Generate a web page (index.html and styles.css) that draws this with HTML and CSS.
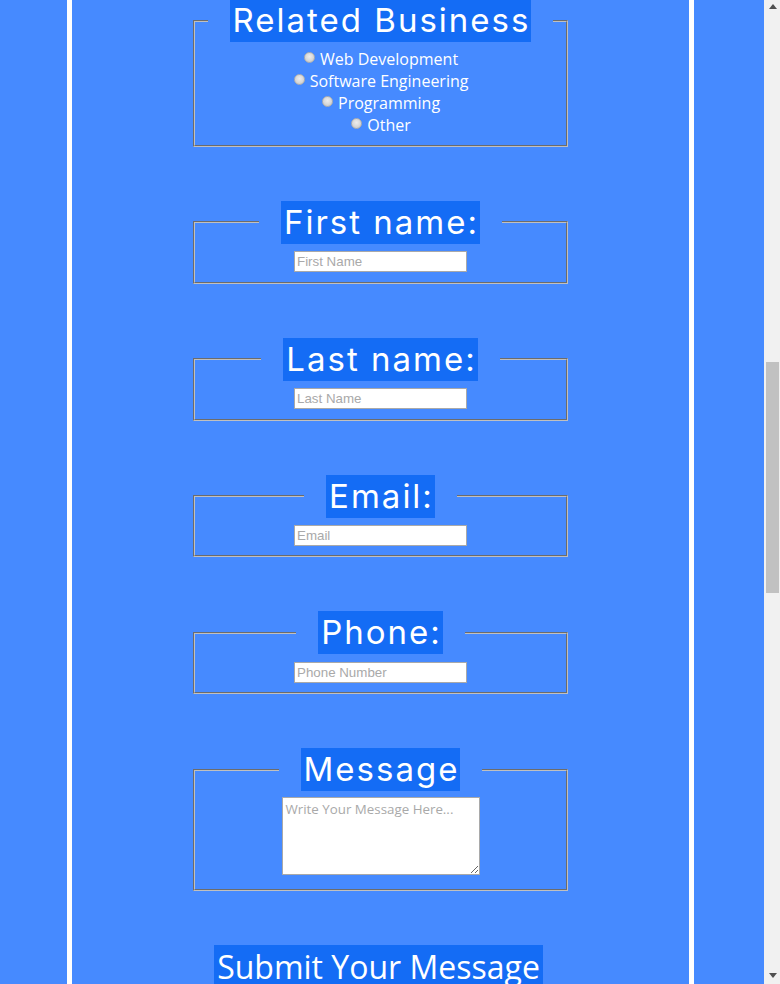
FILE: index.html
```html
<!DOCTYPE html>
<html lang="en">
<head>
<meta charset="utf-8">
<title>Contact Us</title>
<link rel="stylesheet" href="styles.css">
</head>
<body>
<div class="page">
  <header class="intro">
    <h1 class="intro-title">Contact Us</h1>
    <p class="intro-text">Tell us about your project and we will get back to you as soon as possible.</p>
  </header>

  <form class="contact" action="#">
    <fieldset class="group related">
      <legend class="group-legend"><span class="legend-text">Related Business</span></legend>
      <label class="choice"><input class="radio" type="radio" name="business"> Web Development</label>
      <label class="choice"><input class="radio" type="radio" name="business"> Software Engineering</label>
      <label class="choice"><input class="radio" type="radio" name="business"> Programming</label>
      <label class="choice"><input class="radio" type="radio" name="business"> Other</label>
    </fieldset>

    <fieldset class="group">
      <legend class="group-legend"><span class="legend-text">First name:</span></legend>
      <div class="field"><input class="text-input" type="text" placeholder="First Name"></div>
    </fieldset>

    <fieldset class="group">
      <legend class="group-legend"><span class="legend-text">Last name:</span></legend>
      <div class="field"><input class="text-input" type="text" placeholder="Last Name"></div>
    </fieldset>

    <fieldset class="group">
      <legend class="group-legend"><span class="legend-text">Email:</span></legend>
      <div class="field"><input class="text-input" type="email" placeholder="Email"></div>
    </fieldset>

    <fieldset class="group">
      <legend class="group-legend"><span class="legend-text">Phone:</span></legend>
      <div class="field"><input class="text-input" type="tel" placeholder="Phone Number"></div>
    </fieldset>

    <fieldset class="group">
      <legend class="group-legend"><span class="legend-text">Message</span></legend>
      <div class="field"><textarea class="message" placeholder="Write Your Message Here..."></textarea></div>
    </fieldset>

    <button class="submit" type="submit">Submit Your Message</button>
  </form>

  <footer class="footer">
    <p class="footer-text">Thank you for visiting.</p>
  </footer>
</div>

<div class="scrollbar" aria-hidden="true">
  <svg class="scroll-arrow scroll-arrow-up" width="8" height="5" viewBox="0 0 8 5"><polygon points="0,5 8,5 4,0" fill="#505050"/></svg>
  <div class="scroll-thumb"></div>
  <svg class="scroll-arrow scroll-arrow-down" width="8" height="5" viewBox="0 0 8 5"><polygon points="0,0 8,0 4,5" fill="#505050"/></svg>
</div>
<script src="script.js"></script>
</body>
</html>
```

FILE: styles.css
```css
html {
  background: #468aff;
}

body {
  margin: 0;
  background: #468aff;
  font-family: "Open Sans", "Noto Sans", sans-serif;
  font-size: 16px;
  color: #ffffff;
}

.page {
  width: 617px;
  margin-left: 67px;
  border-left: 5px solid #ffffff;
  border-right: 5px solid #ffffff;
  background: #468aff;
}

.intro {
  min-height: 1469px;
  text-align: center;
  box-sizing: border-box;
  padding-top: 40px;
}

.intro-title {
  margin: 0;
  font-family: Inter, sans-serif;
  font-weight: 400;
  font-size: 48px;
}

.intro-text {
  margin: 16px 40px;
}

.contact {
  display: flex;
  flex-direction: column;
  align-items: center;
  gap: 54px;
}

.group {
  box-sizing: border-box;
  width: 375px;
  margin: 0;
  padding: 0.35em 0.75em 9.25px;
  border: 2px groove #c0c0c0;
  text-align: center;
}

.group-legend {
  margin: 0 auto;
  padding: 0 22px;
}

.legend-text {
  display: inline-block;
  padding: 0 1px 0 3px;
  background: #146cf5;
  color: #ffffff;
  font-family: Inter, sans-serif;
  font-size: 33px;
  letter-spacing: 2px;
  line-height: 43px;
  font-weight: 400;
}

.choice {
  display: block;
  line-height: 22px;
  padding-right: 4px;
}

.radio {
  appearance: none;
  -webkit-appearance: none;
  width: 11px;
  height: 11px;
  margin: 0 1px 0 5px;
  border: 1px solid #b0b0b0;
  border-radius: 50%;
  background: radial-gradient(circle at 50% 40%, #ededed 0%, #d8d8d8 55%, #c0c0c0 100%);
  vertical-align: 2px;
  box-sizing: border-box;
}

.text-input {
  box-sizing: border-box;
  width: 173px;
  height: 21px;
  margin: 0;
  padding: 1px 2px;
  border: 1px solid #a9a9a9;
  background: #ffffff;
  font-family: "Liberation Sans", Arial, sans-serif;
  font-size: 13.33px;
  color: #000000;
}

.text-input::placeholder {
  color: #a9a9a9;
}

.message {
  box-sizing: border-box;
  width: 198px;
  height: 78px;
  margin: 0;
  padding: 2px 3px;
  border: 1px solid #a9a9a9;
  background: #ffffff;
  font-family: "Open Sans", sans-serif;
  font-size: 13.33px;
  vertical-align: baseline;
}

.message::placeholder {
  color: #a9a9a9;
}

.submit {
  margin: 0 4px 0 0;
  padding: 0 3px;
  border: none;
  background: #146cf5;
  color: #ffffff;
  font-family: "Open Sans", sans-serif;
  font-size: 32px;
  line-height: normal;
  cursor: pointer;
}

.footer {
  min-height: 1540px;
  text-align: center;
  padding-top: 40px;
  box-sizing: border-box;
}

.footer-text {
  margin: 0;
}

.scrollbar {
  position: fixed;
  top: 0;
  right: 0;
  bottom: 0;
  width: 16px;
  background: #f1f1f1;
}

.scroll-arrow {
  position: absolute;
  left: 5px;
  display: block;
}

.scroll-arrow-up {
  top: 4px;
}

.scroll-arrow-down {
  bottom: 6px;
}

.scroll-thumb {
  position: absolute;
  top: 362px;
  left: 2px;
  right: 1px;
  height: 231px;
  background: #c1c1c1;
}
```

FILE: script.js
```js
function placeView() {
  var target = document.querySelector('.related');
  if (!target) return;
  var top = target.getBoundingClientRect().top + window.scrollY;
  window.scrollTo(0, Math.round(top) + 1);
}
placeView();
window.addEventListener('load', placeView);
```
